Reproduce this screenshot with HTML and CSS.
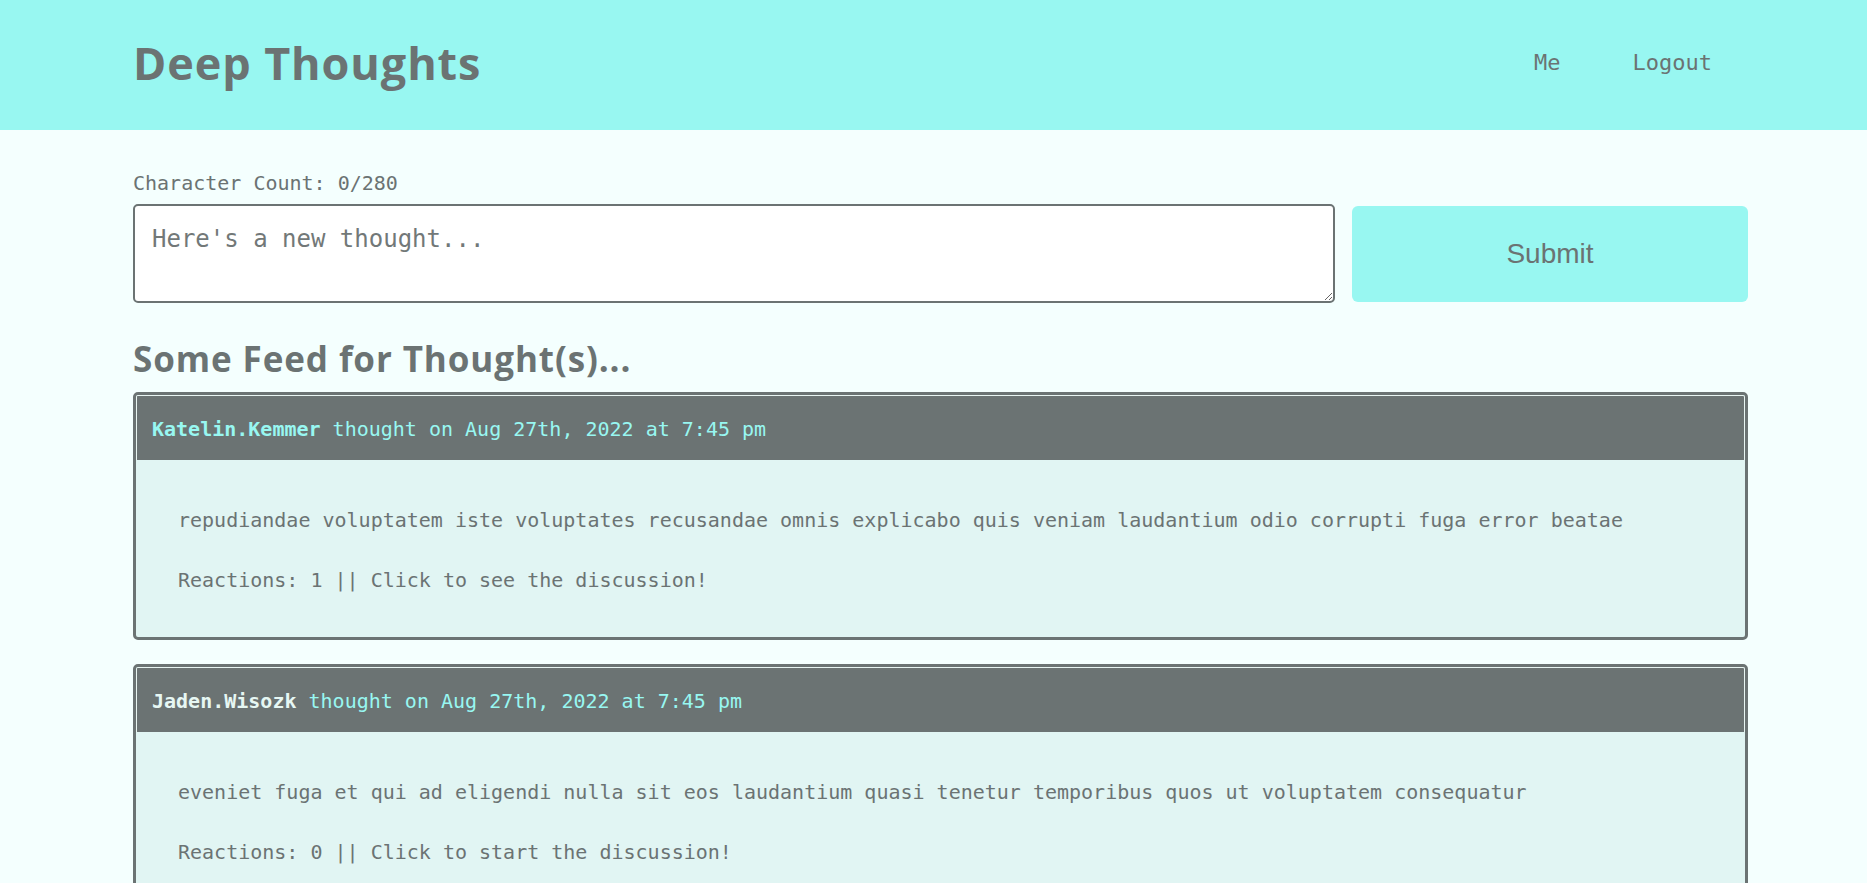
FILE: index.html
```html
<!DOCTYPE html>
<html lang="en">
<head>
<meta charset="utf-8">
<title>Deep Thoughts</title>
<link rel="stylesheet" href="styles.css">
</head>
<body>
<header class="site-header">
  <h1 class="brand">Deep Thoughts</h1>
  <nav class="nav">
    <a class="nav-link" href="#">Me</a>
    <a class="nav-link" href="#">Logout</a>
  </nav>
</header>
<main class="main">
  <p class="char-count">Character Count: 0/280</p>
  <form class="thought-form">
    <textarea class="thought-input" placeholder="Here's a new thought..."></textarea>
    <button class="submit-btn" type="button">Submit</button>
  </form>
  <h3 class="feed-title">Some Feed for Thought(s)...</h3>
  <div class="card">
    <div class="card-header">
      <a class="username" href="#">Katelin.Kemmer</a> thought on Aug 27th, 2022 at 7:45 pm
    </div>
    <div class="card-body">
      <p class="card-line">repudiandae voluptatem iste voluptates recusandae omnis explicabo quis veniam laudantium odio corrupti fuga error beatae</p>
      <p class="card-line">Reactions: 1 || Click to see the discussion!</p>
    </div>
  </div>
  <div class="card">
    <div class="card-header">
      <a class="username visited" href="#">Jaden.Wisozk</a> thought on Aug 27th, 2022 at 7:45 pm
    </div>
    <div class="card-body">
      <p class="card-line">eveniet fuga et qui ad eligendi nulla sit eos laudantium quasi tenetur temporibus quos ut voluptatem consequatur</p>
      <p class="card-line">Reactions: 0 || Click to start the discussion!</p>
    </div>
  </div>
</main>
</body>
</html>
```
FILE: styles.css
```css
* { box-sizing: border-box; }

html, body {
  margin: 0;
  padding: 0;
}

body {
  background: #f4fffe;
  color: #6b7373;
  font-family: "DejaVu Sans Mono", "Liberation Mono", monospace;
  font-size: 20px;
  line-height: 24px;
  overflow: hidden;
}

.site-header {
  background: #98f7f1;
  height: 130px;
  display: flex;
  align-items: center;
  justify-content: space-between;
  padding: 0 0 0 133px;
}

.brand {
  margin: 0 0 5px;
  font-family: "Open Sans", Lato, sans-serif;
  font-weight: 700;
  font-size: 45px;
  line-height: 52px;
  letter-spacing: 0.9px;
  color: #6b7373;
}

.nav {
  display: flex;
  margin-right: 119px;
  margin-bottom: 4px;
}

.nav-link {
  font-size: 22px;
  color: #6b7373;
  text-decoration: none;
  padding: 0 36px;
  line-height: 28px;
}

.main {
  padding: 41px 119px 0 133px;
}

.char-count {
  margin: 0 0 9px;
  font-size: 20px;
  line-height: 24px;
}

.thought-form {
  display: flex;
  align-items: center;
  gap: 17px;
}

.thought-input {
  flex: 1;
  height: 99px;
  border: 2px solid #6b7373;
  border-radius: 5px;
  background: #fff;
  padding: 19px 17px;
  font-family: "DejaVu Sans Mono", "Liberation Mono", monospace;
  font-size: 24px;
  line-height: 28px;
  color: #6b7373;
}

.thought-input::placeholder {
  color: #727878;
}

.submit-btn {
  width: 396px;
  height: 96px;
  border: none;
  border-radius: 6px;
  background: #98f7f1;
  color: #6b7373;
  font-family: "Liberation Sans", Arial, sans-serif;
  font-size: 28px;
}

.feed-title {
  margin: 35px 0 12px;
  font-family: "Open Sans", Lato, sans-serif;
  font-weight: 700;
  font-size: 35px;
  line-height: 42px;
  letter-spacing: 0.9px;
  color: #6b7373;
}

.card {
  border: 3px solid #6b7373;
  border-radius: 5px;
  margin-bottom: 24px;
  background: #e1f5f3;
  overflow: hidden;
}

.card-header {
  background: #6b7373;
  color: #98f7f1;
  border: 1px solid #e8f5f2;
  border-bottom: none;
  border-radius: 2px 2px 0 0;
  height: 65px;
  padding: 21px 15px 0;
  font-size: 20px;
  line-height: 24px;
}

.username {
  color: #98f7f1;
  font-weight: 700;
  text-decoration: none;
}

.username.visited {
  color: #e6f7f3;
}

.card-body {
  display: flex;
  flex-direction: column;
  gap: 36px;
  padding: 48px 42px 45px;
}

.card-line {
  margin: 0;
  font-size: 20px;
  line-height: 24px;
}
```
